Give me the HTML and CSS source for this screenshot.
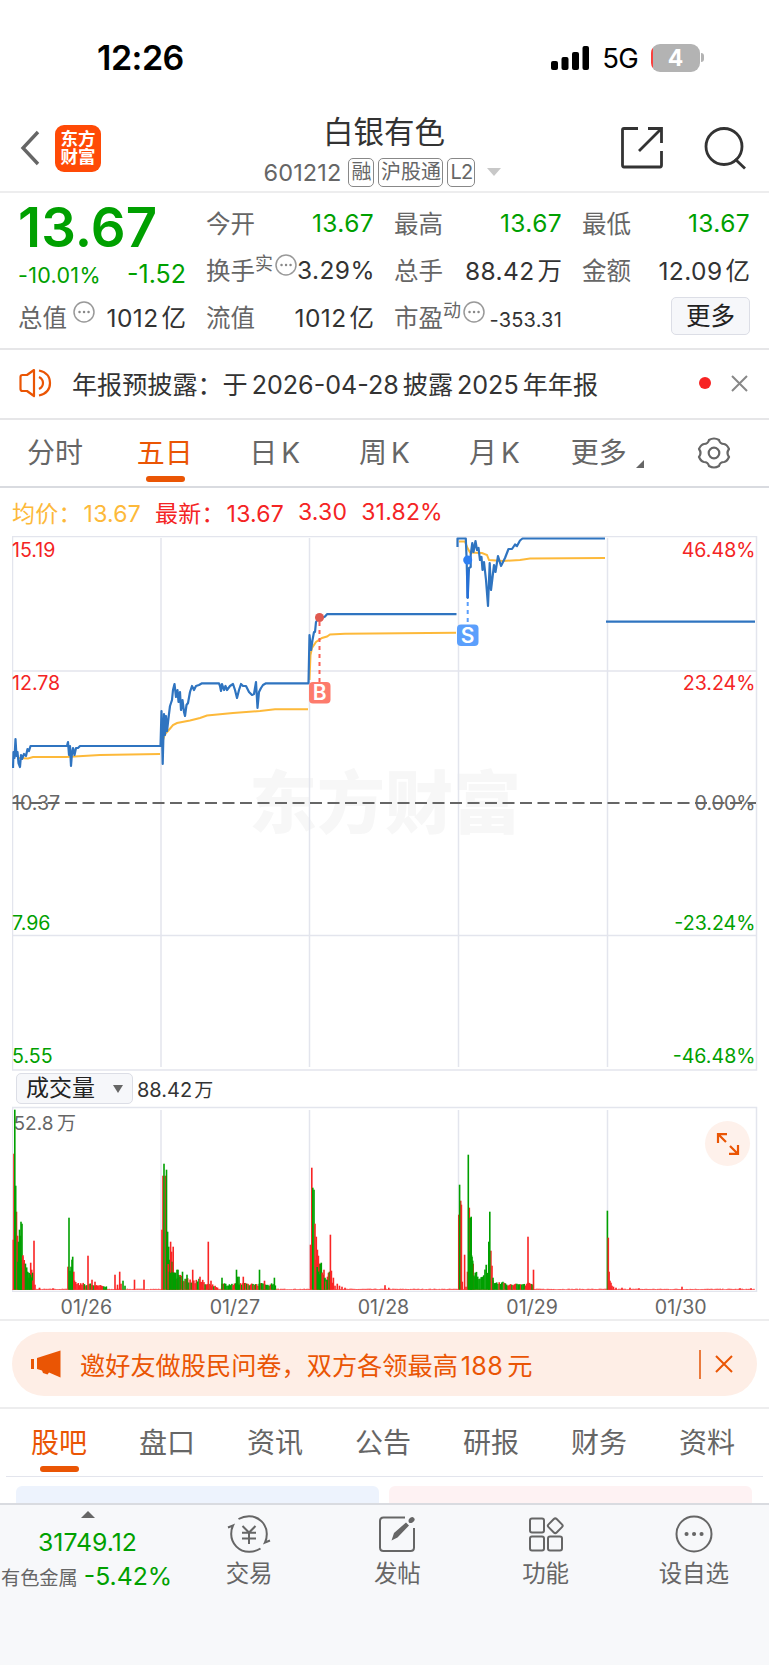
FILE: index.html
```html
<!DOCTYPE html>
<html lang="zh-CN">
    <head>
        <meta charset="UTF-8" />
        <meta name="viewport" content="width=device-width, initial-scale=1.0" />
        <title>白银有色 601212</title>
        <link rel="stylesheet" href="styles.css">
    </head>
    <body>
        <div class="status-bar">
            <span class="time">12:26</span>
            <div class="status-right">
                <svg class="signal" width="38" height="24" viewBox="0 0 38 24">
                    <rect x="0" y="15" width="7" height="9" rx="2" />
                    <rect x="10.5" y="11" width="7" height="13" rx="2" />
                    <rect x="21" y="6" width="7" height="18" rx="2" />
                    <rect x="31.5" y="0" width="6.5" height="24" rx="2" />
                </svg>
                <span class="network">5G</span>
                <span class="battery">4</span>
                <span class="battery-cap"></span>
            </div>
        </div>

        <header class="header">
            <div class="header-left">
                <svg width="20" height="36" viewBox="0 0 20 36">
                    <path d="M18 2 L3 18 L18 34" fill="none" stroke="#666" stroke-width="3.4" />
                </svg>
                <div class="logo"><span>东方</span><span>财富</span></div>
            </div>
            <div class="header-title">
                <h1>白银有色</h1>
                <div class="sub">
                    <span class="code">601212</span>
                    <span class="tag tag-rong">融</span>
                    <span class="tag tag-hgt">沪股通</span>
                    <span class="tag tag-l2">L2</span>
                    <i class="caret"></i>
                </div>
            </div>
            <div class="header-right">
                <svg width="44" height="44" viewBox="0 0 44 44" fill="none" stroke="#333" stroke-width="2.8">
                    <path d="M18 2.5 H4 Q2.5 2.5 2.5 4 V39 Q2.5 41 4 41 H40 Q41.5 41 41.5 39 V25" />
                    <path d="M28 2.5 H41.5 V17 M41 3 L19 25" />
                </svg>
                <svg width="44" height="44" viewBox="0 0 44 44" fill="none" stroke="#333" stroke-width="2.8">
                    <circle cx="20" cy="20.5" r="18" />
                    <path d="M31 33 L41 42.5" />
                </svg>
            </div>
        </header>

        <section class="quote">
            <div class="price">13.67</div>
            <div class="change"><span class="pct">-10.01%</span><span>-1.52</span></div>
            <div class="cell c1 r3">
                <label>总值</label><svg class="dots" viewBox="0 0 22 22"><use href="#dots" /></svg><b>1012<em>亿</em></b>
            </div>
            <div class="cell c2 r1"><label>今开</label><b class="green">13.67</b></div>
            <div class="cell c2 r2">
                <label>换手<sup>实</sup></label><svg class="dots tight" viewBox="0 0 22 22"><use href="#dots" /></svg><b>3.29%</b>
            </div>
            <div class="cell c2 r3"><label>流值</label><b>1012<em>亿</em></b></div>
            <div class="cell c3 r1"><label>最高</label><b class="green">13.67</b></div>
            <div class="cell c3 r2"><label>总手</label><b>88.42<em>万</em></b></div>
            <div class="cell c3 r3">
                <label>市盈<sup>动</sup></label><svg class="dots tight" viewBox="0 0 22 22"><use href="#dots" /></svg><b class="small">-353.31</b>
            </div>
            <div class="cell c4 r1"><label>最低</label><b class="green">13.67</b></div>
            <div class="cell c4 r2"><label>金额</label><b>12.09<em>亿</em></b></div>
            <div class="cell c4 r3"><button class="more-btn">更多</button></div>
        </section>

        <section class="notice">
            <svg width="33" height="30" viewBox="0 0 33 30" fill="none" stroke="#ea5504" stroke-width="2.2" stroke-linejoin="round">
                <path d="M15 2 L8 7 H3.5 Q1.5 7 1.5 9 V21 Q1.5 23 3.5 23 H8 L15 28 Z" />
                <path d="M20 9 Q24 11 24 15 Q24 19 20 21" />
                <path d="M20 2.5 Q31 5 31 15 Q31 25 20 27.5" />
            </svg>
            <p class="notice-text">年报预披露：于<i>2026-04-28</i>披露<i>2025</i>年年报</p>
            <span class="red-dot"></span>
            <svg width="17" height="17" viewBox="0 0 17 17" stroke="#888" stroke-width="2"><path d="M1 1 L16 16 M16 1 L1 16" /></svg>
        </section>

        <nav class="period-tabs">
            <a>分时</a>
            <a class="active">五日</a>
            <a>日<i>K</i></a>
            <a>周<i>K</i></a>
            <a>月<i>K</i></a>
            <a class="more">更多</a>
            <svg width="34" height="32" viewBox="0 0 34 32" fill="none" stroke="#666" stroke-width="2.2" stroke-linejoin="round">
                <path d="M12 3 Q17 0 22 3 Q23 7 27 7 Q30 7.5 32 12 Q29 16 32 20 Q30 24.5 27 25 Q23 25 22 29 Q17 32 12 29 Q11 25 7 25 Q4 24.5 2 20 Q5 16 2 12 Q4 7.5 7 7 Q11 7 12 3 Z" />
                <circle cx="17" cy="16" r="5.3" />
            </svg>
        </nav>

        <div class="legend">
            <span class="avg">均价：<i>13.67</i></span>
            <span>最新：<i>13.67</i></span>
            <span>3.30</span>
            <span>31.82%</span>
        </div>

        <svg class="chart" width="746" height="535" viewBox="12 536 746 535">
            <g class="watermark">
                <text x="249" y="828" textLength="272">东方财富</text>
            </g>
            <g class="grid">
                <path d="M12.5 536.5 H756.5 V1070 H12.5 Z" />
                <path d="M161 538 V1067 M309.5 538 V1067 M458.5 538 V1067 M607.5 538 V1067 M13 671 H756 M13 935.5 H756" />
            </g>
            <path d="M12.5 803 H756" stroke="#666" stroke-width="2" stroke-dasharray="12 5.5" />

            <g class="avg-line">
                <path d="M18 758 L28 758.5 L33 757 L66 757 L100 755 L160 754" />
                <path d="M163 740 L165 734 L168 731 L173 725 L177 723 L190 720.5 L200 718 L207 715.5 L233 713 L260 711 L275 709.3 H308" />
                <path d="M309.5 680 L310.5 655 L312 648 L316 642 L322 638 L327 636.5 L330 634.5 L345 633.7 L456 632.8" />
                <path d="M459 541.5 H465 L467.5 548 L470 552.5 L482 553 L487 555 L489 560 L503 561 L520 560 L530 558.5 L605 558" />
            </g>
            <g class="price-line">
                <path d="M13 768 L13.5 752 L14.5 758 L15.5 739 L16.5 756 L17.5 752 L18.5 763 L20 767 L21 755 L22 759 L24 754 L26 756 L27.5 749 L29 751 L30.5 746 H67 L68 742 L69 755 L70 746 L71 766 L72 753 L73 748 L74.5 755 L76 748 L78 748 L80 746 H160.5 L161.5 711 L162.7 764 L164 714 L165 735 L166 716 L167 731 L168.5 718 L170 706 L172 700 L173 690 L174.5 684 L176 697 L177.5 690 L178.5 702 L180 692 L181 710 L182.5 700 L184 712 L185 716 L186.5 705 L188 703 L190 692 L191 689 L192 686 L194 690 L196 686 L199 685 L202 683.3 H219 L220 686 L221 691 L222 684 L224 690 L225.5 686 L227 690 L230 686 L233 684 L235 690 L237 698 L239 690 L241 684 L243 686 L246 686 L249 692 L252 695 L254 694 L256 682 L257.5 708 L259 692 L261 688 L263 685 L266 683.3 H308.5 L309.5 635 L311 650 L312.5 640 L314 632 L315 632 L316 622 L318 619 L322 618 L325 616.5 L327 614.2 H456.5" />
                <path d="M457.5 547 V538.5 H465.8 L466.5 556 L467.7 598 L469 568 L470.7 567 V555 L472.3 543 L473.5 552 L475.5 541 L477 550 L478.5 548 L480 560 L481.5 557 L482.5 570 L484 562 L486 580 L488 606 L489.7 563 L491 590 L492.7 576 L494 565 L495.5 572 L498 556 L501 566 L505 558 L508.5 549 H512 L515 544.5 L517 546 L520 540.5 L522.5 538.5 H605" />
                <path d="M606 621.7 H755" />
            </g>

            <path d="M319.5 622 V682" stroke="#fb5f55" stroke-width="2" stroke-dasharray="4 4" />
            <circle cx="319.5" cy="617.5" r="4.5" fill="#e05a50" />
            <rect x="309" y="682" width="21.5" height="21.5" rx="4" fill="#fd7b6c" />
            <text class="mark" x="319.7" y="700.2">B</text>
            <path d="M467.7 570 V598" stroke="#2670d8" stroke-width="2.6" />
            <path d="M467.7 602 V624" stroke="#5b9ffc" stroke-width="2" stroke-dasharray="4 4" />
            <circle cx="467.7" cy="560" r="4.5" fill="#2d7ff2" />
            <rect x="457" y="624.5" width="21.5" height="21.5" rx="4" fill="#5b9ffc" />
            <text class="mark" x="467.7" y="642.7">S</text>

            <g class="axis">
                <text class="up" x="12" y="556.5">15.19</text>
                <text class="up" x="12" y="689.5">12.78</text>
                <text class="flat" x="12" y="809.5">10.37</text>
                <text class="down" x="12" y="929.5">7.96</text>
                <text class="down" x="12" y="1062.5">5.55</text>
            </g>
            <g class="axis right">
                <text class="up" x="755.5" y="556.5">46.48%</text>
                <text class="up" x="755.5" y="689.5">23.24%</text>
                <text class="flat" x="755.5" y="809.5">0.00%</text>
                <text class="down" x="755.5" y="929.5">-23.24%</text>
                <text class="down" x="755.5" y="1062.5">-46.48%</text>
            </g>
        </svg>

        <div class="volume-head">
            <button class="volume-select">成交量<i class="caret"></i></button>
            <span class="volume-value">88.42<em>万</em></span>
        </div>

        <div class="volume">
            <svg id="volumeChart" width="746" height="186" viewBox="12 1106 746 186">
                <path class="grid" d="M12.5 1107.5 H756.5 V1291.5 H12.5 Z M161 1110 V1289 M309.5 1110 V1289 M458.5 1110 V1289 M607.5 1110 V1289" />
                <text class="volume-max" x="13.5" y="1129.5">52.8</text>
                <text class="volume-max" x="57" y="1129.5">万</text>
            </svg>
            <button class="expand">
                <svg width="24" height="24" viewBox="0 0 24 24" fill="none" stroke="#ea5504" stroke-width="2.2">
                    <path d="M2 11 V2.2 H11 M2.5 2.5 L10 10 M22 13 V21.8 H13 M21.5 21.5 L14 14" />
                </svg>
            </button>
        </div>
        <div class="dates">
            <span>01/26</span><span>01/27</span><span>01/28</span><span>01/29</span><span>01/30</span>
        </div>

        <section class="promo">
            <div class="promo-inner">
                <svg width="31" height="28" viewBox="0 0 31 28" fill="#ea5504">
                    <path d="M0 9 H3 V19 H0 Z M6 8 L29.5 0.5 V27.5 L18 22.5 L16.5 24.5 L12 23 L11 20.5 L6 19 Z" />
                </svg>
                <p>邀好友做股民问卷，双方各领最高<i>188</i>元</p>
                <span class="bar"></span>
                <svg width="18" height="18" viewBox="0 0 18 18" stroke="#ea5504" stroke-width="2"><path d="M1 1 L17 17 M17 1 L1 17" /></svg>
            </div>
        </section>

        <nav class="info-tabs">
            <a class="active">股吧</a>
            <a>盘口</a>
            <a>资讯</a>
            <a>公告</a>
            <a>研报</a>
            <a>财务</a>
            <a>资料</a>
        </nav>

        <div class="cards">
            <div class="card blue"></div>
            <div class="card pink"></div>
        </div>

        <footer class="bottom-bar">
            <div class="index">
                <i class="arrow-up"></i>
                <span class="index-value">31749.12</span>
                <span class="index-name">有色金属<b>-5.42%</b></span>
            </div>
            <a>
                <svg width="44" height="40" viewBox="0 0 44 40" fill="none" stroke="#666" stroke-width="2">
                    <path d="M11.5 5 Q16.500 2.200 22 2.200 A17.800 17.800 0 0 1 39.800 20 Q39.800 25 38 28.500 L43 26.500 M33.500 34.500 Q28 38 22 37.800 A17.800 17.800 0 0 1 4.200 20 Q4.200 15 6 11.500 L1 13.500" />
                    <path d="M15.500 12 L22 18.500 L28.500 12 M22 18.500 V30 M15 18.700 H29 M15 24.500 H29" />
                </svg>
                交易
            </a>
            <a>
                <svg width="40" height="40" viewBox="0 0 40 40" fill="none" stroke="#666" stroke-width="2">
                    <path d="M28 3.500 H6.500 Q3 3.500 3 7 V33.500 Q3 37 6.500 37 H33.500 Q37 37 37 33.500 V14" />
                    <path d="M14.500 26.500 L17 19 L29 8.500 L32 11.500 L20.500 23.500 Z M32 5 Q35 1.500 37 4 Q39 6 35.500 8.500 Q33 9.500 32 8.500 Q31 7 32 5 Z" fill="#666" stroke="none" />
                </svg>
                发帖
            </a>
            <a>
                <svg width="40" height="40" viewBox="0 0 40 40" fill="none" stroke="#666" stroke-width="2">
                    <rect x="4" y="4.500" width="14" height="14" rx="2" />
                    <rect x="4" y="22.500" width="14" height="14" rx="2" />
                    <rect x="22" y="22.500" width="14" height="14" rx="2" />
                    <rect x="23.500" y="6" width="11.500" height="11.500" rx="2" transform="rotate(45 29.250 11.750)" />
                </svg>
                功能
            </a>
            <a>
                <svg width="40" height="40" viewBox="0 0 40 40" fill="none" stroke="#666" stroke-width="2">
                    <circle cx="20" cy="20" r="17.500" />
                    <path d="M12.500 20 h.1 M20 20 h.1 M27.500 20 h.1" stroke-width="4" stroke-linecap="round" />
                </svg>
                设自选
            </a>
        </footer>

        <svg width="0" height="0" class="defs">
            <symbol id="dots" viewBox="0 0 22 22">
                <circle cx="11" cy="11" r="10" fill="none" stroke="#999" stroke-width="1.5" />
                <path d="M6.500 11 h.1 M11 11 h.1 M15.500 11 h.1" stroke="#888" stroke-width="2.400" stroke-linecap="round" />
            </symbol>
        </svg>

        <script src="script.js"></script>
    </body>
</html>
```

FILE: styles.css
```css
* {
    box-sizing: border-box;
}
body {
    margin: 0;
    width: 769px;
    height: 1665px;
    overflow: hidden;
    display: flex;
    flex-direction: column;
    background: #fff;
    color: #333;
    font-family: Inter, "Noto Sans CJK SC", sans-serif;
}
body > * {
    flex-shrink: 0;
}
i, em, b {
    font-style: normal;
    font-weight: 400;
}
h1, p {
    margin: 0;
    font-weight: 400;
}
button {
    font-family: inherit;
    padding: 0;
}
.defs {
    position: absolute;
}

/* status bar */
.status-bar {
    height: 115px;
    padding: 0 65px 0 97px;
    display: flex;
    justify-content: space-between;
    align-items: center;
    color: #000;
}
.time {
    font-size: 34px;
    font-weight: 600;
    letter-spacing: -0.5px;
}
.status-right {
    display: flex;
    align-items: center;
}
.network {
    margin: 0 13px 0 13px;
    font-size: 27.5px;
    letter-spacing: -0.8px;
}
.battery {
    width: 49px;
    height: 28px;
    border-radius: 9px;
    background: linear-gradient(90deg, #f9413f 2px, #b3b3b3 2px);
    color: #fff;
    font-size: 23px;
    font-weight: 700;
    line-height: 28px;
    text-align: center;
}
.battery-cap {
    width: 3px;
    height: 9px;
    margin-left: 1px;
    border-radius: 0 3px 3px 0;
    background: #b3b3b3;
}

/* header */
.header {
    height: 78px;
    padding: 0 21px 0 20px;
    display: grid;
    grid-template-columns: 147px 1fr 147px;
    border-bottom: 2px solid #ededee;
}
.header-left {
    display: flex;
    align-items: center;
    gap: 15px;
    height: 66px;
}
.logo {
    width: 46px;
    height: 47px;
    border-radius: 9px;
    background: #ff4a06;
    color: #fff;
    font-size: 17.5px;
    font-weight: 700;
    line-height: 18px;
    display: flex;
    flex-direction: column;
    align-items: center;
    justify-content: center;
}
.header-title {
    display: flex;
    flex-direction: column;
    align-items: center;
}
.header h1 {
    font-size: 30.5px;
    line-height: 33px;
}
.sub {
    display: flex;
    align-items: center;
    height: 30px;
    margin: 9px 3px 0 0;
    gap: 4px;
    color: #666;
}
.code {
    font-size: 23.5px;
    letter-spacing: 0.1px;
    margin-right: 3px;
}
.tag {
    height: 29px;
    border: 1.5px solid #888;
    border-radius: 5px;
    font-size: 20px;
    line-height: 26px;
    text-align: center;
}
.tag-rong {
    width: 26px;
}
.tag-hgt {
    width: 65px;
}
.tag-l2 {
    width: 28px;
    letter-spacing: -0.8px;
}
.caret {
    border: 7px solid transparent;
    border-top: 8px solid #c8c8c8;
    border-bottom: 0;
}
.sub .caret {
    margin-left: 8px;
}
.header-right {
    display: flex;
    align-items: center;
    justify-content: space-between;
    justify-self: end;
    width: 128px;
    height: 66px;
}

/* quote */
.quote {
    height: 157px;
    padding: 6px 19px 10px 18px;
    display: grid;
    grid-template-columns: 168px 168px 168px 168px;
    grid-template-rows: repeat(3, 47px);
    column-gap: 20px;
    border-bottom: 2px solid #e6e6e8;
}
.price {
    grid-area: 1 / 1;
    color: #00a000;
    font-size: 54.5px;
    font-weight: 600;
    line-height: 56px;
    letter-spacing: 0.1px;
}
.change {
    grid-area: 2 / 1;
    display: flex;
    justify-content: space-between;
    align-items: baseline;
    padding-top: 13px;
    color: #00a000;
    font-size: 25px;
    line-height: 30px;
}
.change .pct {
    font-size: 21.5px;
    letter-spacing: 0.3px;
}
.cell {
    display: flex;
    align-items: center;
    font-size: 24.5px;
}
.cell label {
    color: #666;
    white-space: nowrap;
}
.cell sup {
    font-size: 18px;
    line-height: 0;
    vertical-align: 10px;
}
.cell b {
    margin-left: auto;
    letter-spacing: 0.4px;
    white-space: nowrap;
}
.cell em {
    margin-left: 3px;
    letter-spacing: 0;
}
.cell .small {
    font-size: 20px;
    padding-top: 6px;
    letter-spacing: 0.2px;
}
.cell .green {
    color: #00a000;
}
.c1 { grid-column: 1; }
.c2 { grid-column: 2; }
.c3 { grid-column: 3; }
.c4 { grid-column: 4; }
.r1 { grid-row: 1; }
.r2 { grid-row: 2; }
.r3 { grid-row: 3; }
.dots {
    flex: none;
    width: 22px;
    height: 22px;
    margin: 0 0 10px 6px;
}
.dots.tight {
    margin-left: 2px;
}
.more-btn {
    width: 79px;
    height: 38px;
    margin: -2px 0 0 auto;
    border: 1.5px solid #dcdee6;
    border-radius: 5px;
    background: #f6f7fa;
    color: #222;
    font-size: 24.5px;
    line-height: 34px;
}

/* notice */
.notice {
    height: 70px;
    padding: 0 21px 2px 19px;
    display: flex;
    align-items: center;
    border-bottom: 2px solid #e6e6e8;
}
.notice-text {
    margin-left: 20px;
    font-size: 25.1px;
    white-space: nowrap;
    flex: 1;
}
.notice-text i {
    margin: 0 4px;
}
.red-dot {
    width: 12px;
    height: 12px;
    margin-right: 20px;
    border-radius: 50%;
    background: #f72323;
}

/* period tabs */
.period-tabs {
    height: 68px;
    display: grid;
    grid-template-columns: repeat(7, 1fr);
    justify-items: center;
    align-items: center;
    border-bottom: 2px solid #d9dbe0;
    color: #666;
    font-size: 28px;
}
.period-tabs i {
    margin-left: 4px;
}
.period-tabs a,
.info-tabs a {
    position: relative;
    line-height: 40px;
}
.period-tabs .active,
.info-tabs .active {
    color: #ea5504;
}
.period-tabs .active::after,
.info-tabs .active::after {
    content: "";
    position: absolute;
    left: 50%;
    bottom: -9px;
    width: 39px;
    height: 6px;
    margin-left: -19px;
    border-radius: 3px;
    background: #ea5504;
}
.period-tabs .more {
    margin-right: 11px;
}
.period-tabs .more::after {
    content: "";
    position: absolute;
    right: -17px;
    bottom: 5px;
    border-left: 8px solid transparent;
    border-bottom: 8px solid #666;
}

/* legend */
.legend {
    height: 48px;
    padding-left: 12px;
    display: flex;
    align-items: center;
    gap: 14px;
    color: #f42424;
    font-size: 23px;
    letter-spacing: 0.2px;
}
.legend i {
    margin-left: 2px;
}
.legend .avg {
    color: #fdb93a;
}

/* price chart */
.chart {
    display: block;
    margin-left: 12px;
}
.grid {
    fill: none;
    stroke: #e3e5ed;
    stroke-width: 1.5;
}
.watermark text {
    font-size: 68px;
    font-weight: 900;
    fill: #f7f7f7;
}
.avg-line path {
    fill: none;
    stroke: #fdb93a;
    stroke-width: 2;
}
.price-line path {
    fill: none;
    stroke: #2f74c0;
    stroke-width: 2.2;
    stroke-linejoin: round;
}
.mark {
    fill: #fff;
    font-size: 21px;
    font-weight: 600;
    text-anchor: middle;
}
.axis {
    font-size: 19.6px;
}
.axis.right {
    text-anchor: end;
}
.up {
    fill: #f42424;
}
.down {
    fill: #00a000;
}
.flat {
    fill: #666;
}

/* volume */
.volume-head {
    height: 35px;
    padding: 2px 0 2px 16px;
    display: flex;
    align-items: center;
    gap: 4px;
}
.volume-select {
    width: 117px;
    height: 31px;
    border: 1.5px solid #dcdee6;
    border-radius: 5px;
    background: #f6f7fa;
    color: #222;
    font-size: 23px;
    line-height: 27px;
    display: flex;
    align-items: center;
    justify-content: space-between;
    padding: 0 9px;
}
.volume-select .caret {
    border-width: 8px 5px 0;
    border-top-color: #666;
}
.volume-value {
    font-size: 20px;
}
.volume-value em {
    margin-left: 2px;
    font-size: 19px;
}
.volume {
    position: relative;
    height: 187px;
    margin-left: 12px;
}
.volume svg {
    display: block;
}
.volume-max {
    fill: #666;
    font-size: 19px;
}
.expand {
    position: absolute;
    top: 15px;
    right: 19px;
    width: 45px;
    height: 45px;
    border: 0;
    border-radius: 50%;
    background: #fef1eb;
    display: flex;
    align-items: center;
    justify-content: center;
}
.dates {
    height: 28px;
    padding: 0 14px 0 12px;
    display: grid;
    grid-template-columns: repeat(5, 1fr);
    text-align: center;
    color: #666;
    font-size: 19.6px;
    line-height: 28px;
    border-bottom: 2px solid #ededee;
}

/* promo */
.promo {
    height: 88px;
    padding: 11px 12px;
    border-bottom: 2px solid #ededee;
}
.promo-inner {
    height: 64px;
    padding: 0 24px 0 19px;
    display: flex;
    align-items: center;
    border-radius: 32px;
    background: #feeee6;
    color: #ea5504;
    font-size: 25.2px;
}
.promo-inner p {
    flex: 1;
    margin-left: 18px;
    white-space: nowrap;
}
.promo-inner i {
    margin: 0 4px 0 3px;
    letter-spacing: 0.3px;
}
.promo-inner .bar {
    width: 2px;
    height: 29px;
    margin-right: 14px;
    background: #ea7a3c;
}

/* info tabs */
.info-tabs {
    height: 68px;
    margin: 0 6px;
    padding: 1px 28px 0 25px;
    display: flex;
    justify-content: space-between;
    align-items: center;
    border-bottom: 1.5px solid #e3e5ed;
    color: #666;
    font-size: 28px;
}
.cards {
    height: 26px;
    padding: 9px 17px 0 16px;
    display: grid;
    grid-template-columns: 1fr 1fr;
    gap: 10px;
}
.card {
    border-radius: 6px 6px 0 0;
}
.blue {
    background: #edf3fd;
}
.pink {
    background: #fef2f3;
}

/* bottom bar */
.bottom-bar {
    height: 162px;
    display: grid;
    grid-template-columns: 175px repeat(4, 148.25px);
    border-top: 2px solid #d9dbe0;
    background: #f7f8fa;
    color: #666;
}
.bottom-bar a {
    display: flex;
    flex-direction: column;
    align-items: center;
    padding-top: 9px;
    font-size: 23.5px;
    line-height: 40px;
}
.index {
    display: flex;
    flex-direction: column;
    align-items: center;
    white-space: nowrap;
}
.arrow-up {
    margin-top: 6px;
    border: 7px solid transparent;
    border-bottom: 7px solid #666;
    border-top: 0;
}
.index-value {
    margin-top: 9px;
    color: #00a000;
    font-size: 24.8px;
    line-height: 30px;
}
.index-name {
    align-self: flex-start;
    margin-left: 1px;
    font-size: 19.2px;
    line-height: 38px;
}
.index-name b {
    margin-left: 6px;
    color: #00a000;
    font-size: 24.8px;
}
```

FILE: script.js
```js
// volume bars: [x, height, colour]
const bars = [
    // 01/26
    [13.3, 50, "r"], [14, 136, "r"], [16.5, 78, "r"], [14.8, 180, "g"], [15.7, 104, "g"], [17.5, 54, "r"],
    [18.5, 48, "g"], [19.5, 60, "g"], [20.4, 54, "g"], [21, 68, "g"], [22, 66, "g"], [22.7, 33, "r"], [23.5, 27, "g"],
    [24.5, 21, "g"], [25.5, 19, "g"], [26.5, 17, "r"], [27.5, 18, "g"], [28.5, 12, "r"], [29.5, 12, "g"],
    [30.7, 27, "r"], [31.7, 20, "r"], [32.7, 17, "g"], [34, 49, "r"], [35, 5, "r"], [39.5, 2, "r"], [53, 1.5, "r"],
    [68, 23, "r"], [69, 72, "g"], [70, 19, "g"], [71, 23, "g"], [72, 30, "g"], [72.7, 33, "g"], [73.8, 18, "r"],
    [88, 34, "r"], [92, 10, "r"], [95, 8, "r"], [115, 15, "r"], [117.5, 5, "r"], [119.7, 18, "r"],
    [121, 6, "r"], [123, 9, "g"], [125, 4, "g"], [134.5, 10, "r"], [144, 10, "r"],
    // 01/27
    [162, 60, "r"], [163, 114, "r"], [165.3, 114, "r"], [164, 126, "g"], [166.5, 120, "g"], [167.6, 58, "g"],
    [168.7, 43, "g"], [169.5, 30, "g"], [170.6, 48, "r"], [171.6, 38, "r"], [172.3, 28, "g"], [173.2, 43, "r"],
    [174, 17, "r"], [175.5, 17, "g"], [177, 20, "g"], [178, 20, "g"], [180, 13, "g"], [182.5, 18, "g"],
    [187, 15, "g"], [192.7, 20, "r"], [200, 13, "r"], [208.3, 48, "r"], [211, 9, "r"],
    [222, 12, "g"], [236.5, 20, "g"], [237.7, 13, "g"], [239, 13, "g"], [243.3, 13, "r"], [259.5, 20, "g"],
    [264.5, 9, "r"], [274.4, 12, "g"],
    // 01/28
    [310.5, 45, "r"], [311.8, 122, "r"], [312.8, 102, "g"], [314, 100, "g"], [315, 66, "r"], [316.3, 53, "r"],
    [317.4, 40, "r"], [318.4, 34, "r"], [319.4, 26, "r"], [320.3, 26, "g"], [321.3, 27, "g"], [322.3, 17, "g"],
    [323.2, 15, "g"], [324, 20, "r"], [325, 12, "g"], [326.5, 10, "g"], [327.5, 13, "r"], [328.5, 17, "r"],
    [329.5, 18, "g"], [330.4, 55, "r"], [331.4, 19, "r"], [332.4, 7, "r"], [333.4, 12, "r"], [335, 4, "r"],
    [337.3, 6, "r"], [339.5, 4, "r"], [342, 3, "r"], [345, 2, "r"], [385, 4.5, "r"], [388.8, 2, "r"],
    // 01/29
    [458.8, 75, "r"], [460.7, 89, "r"], [461.4, 85, "r"], [459.6, 105, "g"], [462.3, 8, "r"], [464.6, 35, "r"],
    [466, 3, "r"], [467.5, 18, "r"], [469.3, 82, "r"], [468.3, 135, "g"], [470.2, 72, "g"], [471.2, 73, "g"],
    [472, 33, "g"], [473.2, 26, "r"], [490.9, 39, "r"], [488.8, 48, "g"], [489.8, 78, "g"], [492, 24, "r"],
    [493, 12, "g"], [528, 53, "r"], [530.5, 6, "r"], [533.5, 20, "r"],
    // 01/30
    [607.4, 79, "g"], [608.3, 52, "r"], [609.1, 18, "r"], [610, 9, "r"], [611, 7, "r"], [612, 4, "r"],
    [613.5, 3, "r"], [616, 2, "r"], [622, 2, "r"], [630, 2, "r"], [639, 1.5, "r"], [682, 3, "r"],
    [740, 1.5, "r"], [751, 1.5, "r"],
];

// quieter stretches: [from, to, start height, end height, share of green]
const runs = [
    [74.5, 88, 8, 5, 0.3],
    [89, 107, 6, 3, 0.35],
    [174, 198, 16, 8, 0.6],
    [199, 218, 10, 3, 0.4],
    [222, 276, 6, 6, 0.65],
    [474, 480, 19, 11, 0.9],
    [480, 489, 14, 26, 0.85],
    [493, 507, 10, 6, 0.8],
    [507, 534, 5, 7, 0.4],
];

// lower part of the opening bursts, drawn over the tall bars
const bursts = [
    [18, 33, 40, 11, 0.85],
    [167, 175, 28, 15, 0.85],
    [316, 328, 28, 9, 0.75],
    [469, 475, 40, 17, 0.9],
];

const fill = { r: "#f92525", g: "#00a000" };
const svg = document.getElementById("volumeChart");
const base = 1289.7;

function addBar(x, h, color) {
    const rect = document.createElementNS("http://www.w3.org/2000/svg", "rect");
    rect.setAttribute("x", x - 0.8);
    rect.setAttribute("y", base - h);
    rect.setAttribute("width", 1.6);
    rect.setAttribute("height", h);
    rect.setAttribute("fill", fill[color]);
    svg.appendChild(rect);
}

let seed = 7;
function random() {
    seed = (seed * 16807) % 2147483647;
    return seed / 2147483647;
}

function addRun([from, to, h1, h2, green]) {
    for (let x = from; x < to; x += 1.24) {
        const h = h1 + ((h2 - h1) * (x - from)) / (to - from);
        addBar(x, h * (0.65 + random() * 0.5), random() < green ? "g" : "r");
    }
}

for (let x = 13; x < 755; x += 1.3) {
    addBar(x, 0.5 + random() * 0.5, "r");
}
runs.forEach(addRun);
bars.forEach(([x, h, color]) => addBar(x, h, color));
bursts.forEach(addRun);
```
